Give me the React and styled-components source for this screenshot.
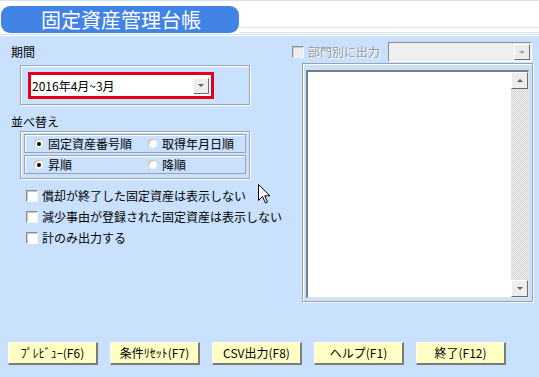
import React from 'react';
import styled, { createGlobalStyle } from 'styled-components';

const GlobalStyle = createGlobalStyle`
  html, body {
    margin: 0;
    padding: 0;
  }
  body {
    background: #c9e1fd;
    font-family: "Noto Sans CJK JP", "Liberation Sans", sans-serif;
    font-size: 12px;
    color: #000;
  }
  * {
    box-sizing: border-box;
  }
`;

const Window = styled.div`
  position: relative;
  width: 539px;
  height: 377px;
  display: flex;
  flex-direction: column;
  background: #c9e1fd;
  overflow: hidden;
`;

const Header = styled.header`
  flex: none;
  height: 37px;
  background: #fff;
  border-top: 1px solid #d3e3f3;
  border-bottom: 3px double #d3e3f3;
  display: flex;
  align-items: flex-start;
  padding-top: 5px;
`;

const TitleTab = styled.div`
  width: 238px;
  height: 27px;
  margin-left: 1px;
  border-radius: 9px;
  background: #4283e6;
  color: #fff;
  font-size: 20px;
  line-height: 27px;
  padding-left: 40px;
  white-space: nowrap;
`;

const HeaderRules = styled.div`
  flex: 1;
  height: 6px;
  margin-top: 21px;
  border-top: 1px solid #d6e4f2;
  border-bottom: 1px solid #d6e4f2;
`;

const Main = styled.main`
  flex: 1;
  display: flex;
`;

const LeftColumn = styled.section`
  width: 290px;
  padding: 8px 0 0 11px;
  display: flex;
  flex-direction: column;
`;

const RightColumn = styled.section`
  flex: 1;
  padding: 5px 0 0 0;
  display: flex;
  flex-direction: column;
`;

const Label = styled.div`
  height: 14px;
  line-height: 14px;
  margin-top: ${(p) => p.$gap || 0}px;
  white-space: nowrap;
`;

const GroupBox = styled.div`
  width: 230px;
  margin-left: 9px;
  margin-top: ${(p) => p.$gap || 0}px;
  height: ${(p) => p.$h}px;
  border: 1px solid #98a2b3;
  box-shadow: inset 1px 1px 0 #fff, 1px 1px 0 #fff;
  padding: ${(p) => p.$pad};
  display: flex;
  flex-direction: column;
  gap: 2px;
`;

const RedFrame = styled.div`
  width: 186px;
  height: 27px;
  border: 3px solid #e3001b;
`;

const Select = styled.div`
  width: 100%;
  height: 100%;
  background: ${(p) => (p.$disabled ? '#efefef' : '#fff')};
  display: flex;
  align-items: center;
  padding-left: 1px;
  white-space: nowrap;
  ${(p) =>
    p.$disabled &&
    `
    border-top: 1px solid #8a8a8a;
    border-left: 1px solid #8a8a8a;
    border-bottom: 1px solid #fff;
    border-right: 1px solid #fff;
  `}
`;

const SelectText = styled.span`
  flex: 1;
  line-height: 14px;
`;

const DropButton = styled.div`
  width: 16px;
  height: 16px;
  margin-right: ${(p) => p.$mr}px;
  background: #ececec;
  border-top: 1px solid #fff;
  border-left: 1px solid #fff;
  border-right: 1px solid #6e6e6e;
  border-bottom: 1px solid #6e6e6e;
  display: flex;
  align-items: center;
  justify-content: center;
`;

const Arrow = styled.span`
  width: 0;
  height: 0;
  border-left: 3px solid transparent;
  border-right: 3px solid transparent;
  ${(p) => (p.$up ? 'border-bottom' : 'border-top')}: 3px solid ${(p) => p.$color || '#606060'};
`;

const RadioRow = styled.div`
  height: 19px;
  border: 1px solid #98a2b3;
  box-shadow: inset 1px 1px 0 #fff;
  display: flex;
  align-items: center;
  padding-left: 8px;
`;

const RadioItem = styled.label`
  display: flex;
  align-items: center;
  gap: 4px;
  width: ${(p) => p.$w}px;
  white-space: nowrap;
  line-height: 14px;
`;

const RadioDot = styled.span`
  width: 11px;
  height: 11px;
  border-radius: 50%;
  background: #fff;
  box-shadow: inset 1px 1px 0 #b8b8b8;
  border: 1px solid #d8d8d8;
  display: flex;
  align-items: center;
  justify-content: center;
  flex: none;

  &::after {
    content: '';
    width: 4px;
    height: 4px;
    border-radius: 50%;
    background: ${(p) => (p.$on ? '#000' : 'transparent')};
  }
`;

const CheckList = styled.div`
  margin-top: 6px;
  padding-left: 15px;
  display: flex;
  flex-direction: column;
`;

const CheckItem = styled.label`
  height: 21px;
  display: flex;
  align-items: center;
  gap: 4px;
  white-space: nowrap;
  line-height: 14px;
  color: ${(p) => (p.$disabled ? '#9a9a9a' : '#000')};
  text-shadow: ${(p) => (p.$disabled ? '1px 1px 0 #fff' : 'none')};
`;

const CheckBox = styled.span`
  width: 12px;
  height: 12px;
  flex: none;
  background: ${(p) => (p.$disabled ? '#eeeeee' : '#fff')};
  border-top: 1px solid #8e8e8e;
  border-left: 1px solid #8e8e8e;
  border-right: 1px solid #f4f4f4;
  border-bottom: 1px solid #f4f4f4;
  box-shadow: inset 1px 1px 0 #c8c8c8;
`;

const TopRow = styled.div`
  display: flex;
  align-items: center;
  height: 20px;
  padding-left: 2px;
`;

const DisabledSelectWrap = styled.div`
  width: 144px;
  height: 20px;
  margin-left: 8px;
`;

const ListFrame = styled.div`
  width: 231px;
  height: 239px;
  margin-left: 12px;
  margin-top: 1px;
  border: 1px solid #98a2b3;
  box-shadow: inset 1px 1px 0 #fff, 1px 1px 0 #fff;
  padding: 6px 3px 3px 3px;
`;

const ListBox = styled.div`
  height: 100%;
  background: #fff;
  border-top: 2px solid #7c7c7c;
  border-left: 2px solid #7c7c7c;
  border-right: 1px solid #e6e6e6;
  border-bottom: 1px solid #e6e6e6;
  display: flex;
  justify-content: flex-end;
`;

const ScrollBar = styled.div`
  width: 17px;
  display: flex;
  flex-direction: column;
  background-color: #f2f2f2;
  background-image: repeating-conic-gradient(#cfcfcf 0 25%, #f4f4f4 0 50%);
  background-size: 2px 2px;
`;

const ScrollButton = styled.div`
  height: 17px;
  background: #ededed;
  border-top: 1px solid #fff;
  border-left: 1px solid #fff;
  border-right: 1px solid #6e6e6e;
  border-bottom: 1px solid #6e6e6e;
  display: flex;
  align-items: center;
  justify-content: center;
`;

const ScrollTrack = styled.div`
  flex: 1;
`;

const Footer = styled.footer`
  flex: none;
  height: 46px;
  display: flex;
  padding: 11px 0 0 8px;
  gap: 12px;
`;

const Button = styled.button`
  width: ${(p) => p.$w || 90}px;
  height: 23px;
  padding: 0;
  background: #ffffc4;
  border-top: 1px solid #fff;
  border-left: 1px solid #fff;
  border-right: 2px solid #7b7b7b;
  border-bottom: 2px solid #7b7b7b;
  font-family: "Noto Sans CJK JP", "Liberation Sans", sans-serif;
  font-size: 12px;
  line-height: 14px;
  color: #000;
  white-space: nowrap;
`;

const Cursor = styled.svg`
  position: absolute;
  left: 258px;
  top: 184px;
`;

const buttons = [
  { label: 'ﾌﾟﾚﾋﾞｭｰ(F6)' },
  { label: '条件ﾘｾｯﾄ(F7)' },
  { label: 'CSV出力(F8)' },
  { label: 'ヘルプ(F1)' },
  { label: '終了(F12)' },
];

const checks = [
  '償却が終了した固定資産は表示しない',
  '減少事由が登録された固定資産は表示しない',
  '計のみ出力する',
];

export default function App() {
  return (
    <Window>
      <GlobalStyle />
      <Header>
        <TitleTab>固定資産管理台帳</TitleTab>
        <HeaderRules />
      </Header>

      <Main>
        <LeftColumn>
          <Label>期間</Label>
          <GroupBox $gap={6} $h={40} $pad="6px 0 0 7px">
            <RedFrame>
              <Select>
                <SelectText>2016年4月~3月</SelectText>
                <DropButton $mr={2}>
                  <Arrow />
                </DropButton>
              </Select>
            </RedFrame>
          </GroupBox>

          <Label $gap={10}>並べ替え</Label>
          <GroupBox $gap={2} $h={48} $pad="2px 3px 0 3px">
            <RadioRow>
              <RadioItem $w={114}>
                <RadioDot $on />
                固定資産番号順
              </RadioItem>
              <RadioItem>
                <RadioDot />
                取得年月日順
              </RadioItem>
            </RadioRow>
            <RadioRow>
              <RadioItem $w={114}>
                <RadioDot $on />
                昇順
              </RadioItem>
              <RadioItem>
                <RadioDot />
                降順
              </RadioItem>
            </RadioRow>
          </GroupBox>

          <CheckList>
            {checks.map((c) => (
              <CheckItem key={c}>
                <CheckBox />
                {c}
              </CheckItem>
            ))}
          </CheckList>
        </LeftColumn>

        <RightColumn>
          <TopRow>
            <CheckItem $disabled>
              <CheckBox $disabled />
              部門別に出力
            </CheckItem>
            <DisabledSelectWrap>
              <Select $disabled>
                <SelectText />
                <DropButton $mr={1}>
                  <Arrow $color="#a0a0a0" />
                </DropButton>
              </Select>
            </DisabledSelectWrap>
          </TopRow>
          <ListFrame>
            <ListBox>
              <ScrollBar>
                <ScrollButton>
                  <Arrow $up />
                </ScrollButton>
                <ScrollTrack />
                <ScrollButton>
                  <Arrow />
                </ScrollButton>
              </ScrollBar>
            </ListBox>
          </ListFrame>
        </RightColumn>
      </Main>

      <Footer>
        {buttons.map((b) => (
          <Button key={b.label}>{b.label}</Button>
        ))}
      </Footer>

      <Cursor width="13" height="20" viewBox="0 0 13 20">
        <path
          d="M0.5 0.5 L0.5 16.5 L4.5 12.5 L7.5 19 L9.5 18 L6.7 11.8 L12 11.8 Z"
          fill="#fff"
          stroke="#000"
          strokeWidth="1"
          strokeLinejoin="miter"
        />
      </Cursor>
    </Window>
  );
}
